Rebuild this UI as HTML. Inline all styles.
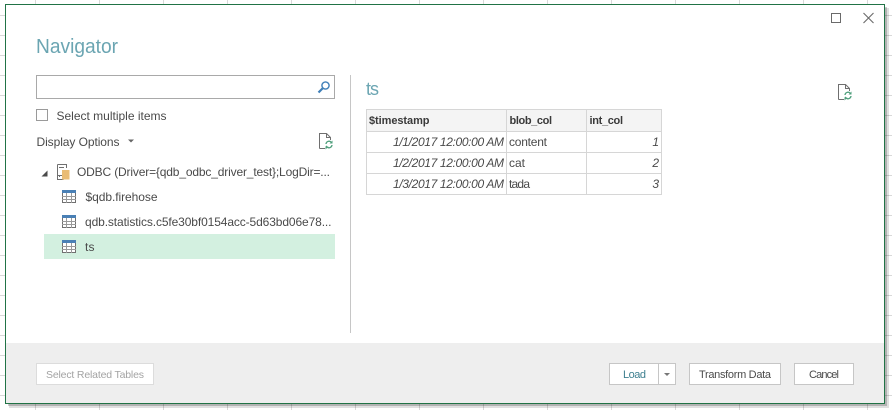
<!DOCTYPE html>
<html><head><meta charset="utf-8"><style>
html,body{margin:0;padding:0;background:#fff;width:892px;height:410px;overflow:hidden}
svg{display:block;position:absolute;left:0;top:0}
text{font-family:"Liberation Sans",sans-serif;font-size:12px;fill:#4a4a4a}
</style></head><body>
<svg width="892" height="410" viewBox="0 0 892 410" xmlns="http://www.w3.org/2000/svg" shape-rendering="crispEdges">
<defs>
<g id="tbl"><rect x="0" y="0" width="14" height="13" fill="#fff" stroke="none"/><rect x=".5" y=".5" width="13" height="12" fill="none" stroke="#707070"/><rect x="0" y="0" width="14" height="3" fill="#4a80b5"/><path d="M0 6.5h14M0 9.5h14M4.5 3v10M9.5 3v10" stroke="#9a9a9a" fill="none"/></g>
<g id="doc"><path d="M.5 15.5V.5H7.5L11.5 4.5V7M7.5 .5V4.5H11.5M.5 15.5H6" fill="none" stroke="#6f6f6f" shape-rendering="auto"/><path d="M7 11a3 3 0 0 1 5-2l1 1M13 12a3 3 0 0 1-5 2l-1-1" fill="none" stroke="#4f9f7c" stroke-width="1.3" shape-rendering="auto"/><path d="M13.5 7.5v3h-3zM6.5 16.5v-3h3z" fill="#4f9f7c" shape-rendering="auto"/></g>
</defs>
<!-- sheet grid -->
<g stroke="#d9d9d9" fill="none">
<path d="M0 15.5H892M0 35.5H892M0 55.5H892M0 75.5H892M0 95.5H892M0 115.5H892M0 135.5H892M0 155.5H892M0 175.5H892M0 195.5H892M0 215.5H892M0 235.5H892M0 255.5H892M0 275.5H892M0 295.5H892M0 315.5H892M0 335.5H892M0 355.5H892M0 375.5H892M0 395.5H892"/>
<path d="M35.5 0V410M99.5 0V410M163.5 0V410M227.5 0V410M291.5 0V410M355.5 0V410M419.5 0V410M483.5 0V410M547.5 0V410M611.5 0V410M675.5 0V410M739.5 0V410M803.5 0V410M867.5 0V410"/>
</g>
<!-- shadow -->
<rect x="9" y="8" width="880" height="400" fill="#000" opacity=".12"/>
<rect x="8" y="7" width="879" height="399" fill="#000" opacity=".2"/>
<!-- dialog -->
<rect x="5.5" y="4.5" width="879" height="399" fill="#fff" stroke="#217346"/>
<rect x="6" y="343" width="878" height="60" fill="#eeeeee"/>
<!-- window controls -->
<rect x="831.5" y="13.5" width="9" height="9" fill="none" stroke="#6a6a6a"/>
<path d="M863.5 13L873.5 23M873.5 13L863.5 23" stroke="#6a6a6a" stroke-width="1.1" fill="none" shape-rendering="auto"/>
<!-- title -->
<text x="36" y="53" style="font-size:20px;fill:#6ba5b2" textLength="82" lengthAdjust="spacingAndGlyphs">Navigator</text>
<!-- search -->
<rect x="36.5" y="75.5" width="298" height="23" fill="#fff" stroke="#a9a9a9"/>
<g shape-rendering="auto" fill="none" stroke="#3f7fb8"><circle cx="325.5" cy="85.5" r="3.6" stroke-width="1.4"/><path d="M322.6 88.4L318.5 92.5" stroke-width="2.2"/></g>
<!-- checkbox -->
<rect x="36.5" y="109.5" width="11" height="11" fill="#fff" stroke="#9a9a9a"/>
<text x="56.5" y="120" textLength="110">Select multiple items</text>
<text x="36.5" y="146" textLength="83">Display Options</text>
<path d="M128 139.5h6l-3 3z" fill="#666" shape-rendering="auto"/>
<use href="#doc" x="319" y="133"/>
<!-- tree -->
<path d="M47.5 170.5v6h-6z" fill="#4a4a4a" shape-rendering="auto"/>
<g fill="none" stroke="#6f6f6f"><path d="M57.5 175.5H64M57.5 164.5V179.5H63.5M57.5 164.5H66.5V168"/><path d="M59 167.5H64M59 176.5H60"/></g>
<rect x="62" y="170" width="7.5" height="9.5" fill="#e9bc75"/>
<text x="77" y="176" textLength="253">ODBC (Driver={qdb_odbc_driver_test};LogDir=...</text>
<use href="#tbl" x="62" y="190"/>
<text x="85.5" y="201" textLength="72">$qdb.firehose</text>
<use href="#tbl" x="62" y="215"/>
<text x="85" y="226" textLength="246.5">qdb.statistics.c5fe30bf0154acc-5d63bd06e78...</text>
<rect x="44" y="234" width="291" height="25" fill="#d3f0e0"/>
<use href="#tbl" x="62" y="240"/>
<text x="85" y="251" textLength="9.5">ts</text>
<!-- divider -->
<rect x="350" y="75" width="1" height="258" fill="#c6c6c6"/>
<!-- preview -->
<text x="366" y="95" style="font-size:18px;fill:#6ba5b2" textLength="13">ts</text>
<use href="#doc" x="838" y="84"/>
<!-- table -->
<rect x="366.5" y="109.5" width="295" height="22" fill="#f4f4f4"/>
<g stroke="#d6d6d6" fill="none"><rect x="366.5" y="109.5" width="295" height="85"/><path d="M366 131.5H662M366 152.5H662M366 173.5H662M506.5 109V195M586.5 109V195"/></g>
<text x="369" y="124" style="font-size:11px;font-weight:bold;fill:#3a3a3a" textLength="60.5">$timestamp</text>
<text x="509.5" y="124" style="font-size:11px;font-weight:bold;fill:#3a3a3a" textLength="42.5">blob_col</text>
<text x="589.5" y="124" style="font-size:11px;font-weight:bold;fill:#3a3a3a" textLength="33.5">int_col</text>
<text x="393" y="146" style="font-style:italic" textLength="111">1/1/2017 12:00:00 AM</text>
<text x="393" y="167" style="font-style:italic" textLength="111">1/2/2017 12:00:00 AM</text>
<text x="393" y="188" style="font-style:italic" textLength="111">1/3/2017 12:00:00 AM</text>
<text x="509" y="146" textLength="38">content</text>
<text x="509" y="167" textLength="16">cat</text>
<text x="509" y="188" textLength="21">tada</text>
<text x="659" y="146" text-anchor="end" style="font-style:italic">1</text>
<text x="659" y="167" text-anchor="end" style="font-style:italic">2</text>
<text x="659" y="188" text-anchor="end" style="font-style:italic">3</text>
<!-- buttons -->
<rect x="36.5" y="363.5" width="117" height="21" fill="#fff" stroke="#dcdcdc"/>
<text x="46" y="378" style="font-size:10.5px;fill:#a3a3a3" textLength="98">Select Related Tables</text>
<rect x="609.5" y="363.5" width="66" height="21" fill="#fff" stroke="#c6c6c6"/>
<path d="M658.5 363V385" stroke="#c6c6c6"/>
<text x="623" y="378" style="font-size:11px;fill:#3d7f8f" textLength="23">Load</text>
<path d="M664 373h6l-3 3z" fill="#777" shape-rendering="auto"/>
<rect x="689.5" y="363.5" width="91" height="21" fill="#fff" stroke="#c6c6c6"/>
<text x="699" y="378" style="font-size:11px" textLength="72">Transform Data</text>
<rect x="794.5" y="363.5" width="59" height="21" fill="#fff" stroke="#c6c6c6"/>
<text x="809" y="378" style="font-size:11px" textLength="30">Cancel</text>
</svg>
</body></html>
